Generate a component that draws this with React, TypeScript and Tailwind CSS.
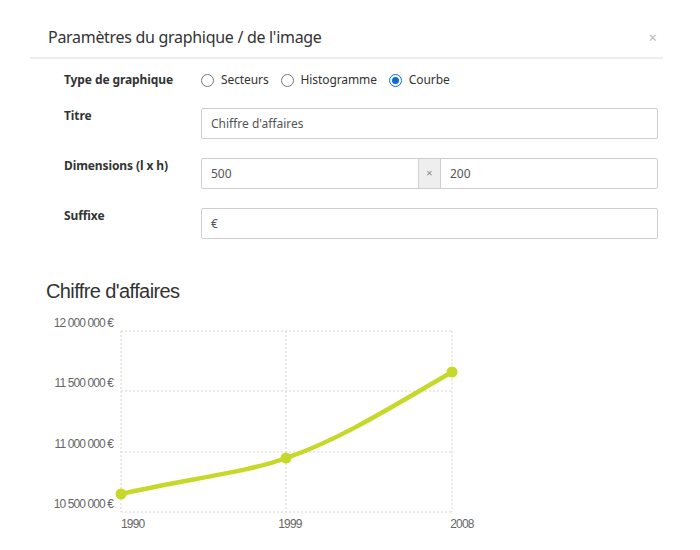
import React from "react";

const font = { fontFamily: "'Noto Sans', 'Open Sans', sans-serif" };

const Radio = ({ label, checked }: { label: string; checked?: boolean }) => (
  <label className="flex items-center gap-[7px] mr-[12px]">
    <span
      className={
        checked
          ? "w-[13px] h-[13px] rounded-full border border-[#0b6bd6] flex items-center justify-center"
          : "w-[13px] h-[13px] rounded-full border border-[#767676] bg-white"
      }
    >
      {checked && <span className="w-[7px] h-[7px] rounded-full bg-[#0b6bd6]" />}
    </span>
    <span className="text-[12px] text-[#333] tracking-[-0.1px]">{label}</span>
  </label>
);

const Row = ({ label, children }: { label: string; children: React.ReactNode }) => (
  <div className="grid grid-cols-[137px_1fr] h-[31px]">
    <div className="text-[12px] font-bold text-[#333] leading-[16px] tracking-[-0.1px]">{label}</div>
    <div>{children}</div>
  </div>
);

const inputCls =
  "w-full h-[31px] border border-[#cfcfcf] rounded-[2px] px-[9px] text-[12px] text-[#555] flex items-center";

// chart geometry (page coordinates, shifted into the svg)
const X0 = 121;
const X1 = 452;
const YTOP = 331;
const YBOT = 512;
const SVG_LEFT = 40;
const SVG_TOP = 305;

const Chart = () => {
  const ys = [331, 391, 452, 512];
  const yLabels = ["12 000 000 €", "11 500 000 €", "11 000 000 €", "10 500 000 €"];
  const xs = [121, 286, 452];
  const xLabels = ["1990", "1999", "2008"];
  const pts = [
    [121, 494],
    [286, 458],
    [452, 372],
  ];
  const ox = (x: number) => x - SVG_LEFT;
  const oy = (y: number) => y - SVG_TOP;
  return (
    <svg width={460} height={240} className="block ml-[40px]" style={{ fontFamily: "'Liberation Sans', Arial, sans-serif" }}>
      {ys.map((y) => (
        <line key={y} x1={ox(X0)} x2={ox(X1)} y1={oy(y)} y2={oy(y)} stroke="#d4d4d4" strokeDasharray="2 2" />
      ))}
      {xs.map((x) => (
        <line key={x} x1={ox(x)} x2={ox(x)} y1={oy(YTOP)} y2={oy(YBOT)} stroke="#d4d4d4" strokeDasharray="2 2" />
      ))}
      {ys.map((y, i) => (
        <text key={y} x={ox(113)} y={oy(y) - 4} textAnchor="end" fontSize={12} fill="#666" letterSpacing={-0.9}>
          {yLabels[i]}
        </text>
      ))}
      {xs.map((x, i) => (
        <text key={x} x={ox(x) + (i === 0 ? 0 : i === 1 ? 4 : 10)} y={oy(528)} textAnchor={i === 0 ? "start" : "middle"} fontSize={12} fill="#666" letterSpacing={-0.8}>
          {xLabels[i]}
        </text>
      ))}
      <path
        d={`M ${ox(121)} ${oy(494)} C ${ox(180)} ${oy(480)} ${ox(250)} ${oy(472)} ${ox(286)} ${oy(458)} C ${ox(340)} ${oy(440)} ${ox(400)} ${oy(402)} ${ox(452)} ${oy(372)}`}
        fill="none"
        stroke="#c6d82a"
        strokeWidth={4.5}
        strokeLinecap="round"
      />
      {pts.map(([x, y]) => (
        <circle key={x} cx={ox(x)} cy={oy(y)} r={5.5} fill="#c6d82a" />
      ))}
    </svg>
  );
};

export default function App() {
  return (
    <div className="w-[700px] h-[550px] bg-white overflow-hidden" style={font}>
      {/* header */}
      <div className="h-[59px] ml-[30px] mr-[37px] pt-[17px] pl-[18px] pr-[6px] flex justify-between items-center border-b-2 border-[#ececec]">
        <div className="text-[16px] text-[#333] tracking-[-0.3px]">Paramètres du graphique / de l'image</div>
        <div className="text-[15px] text-[#bbb] leading-none">×</div>
      </div>

      {/* form */}
      <div className="h-[191px] pl-[64px] pr-[42px] pt-[11px] flex flex-col gap-[19px]">
        <div className="grid grid-cols-[137px_1fr] h-[20px] items-center">
          <div className="text-[12px] font-bold text-[#333] tracking-[-0.1px]">Type de graphique</div>
          <div className="flex items-center">
            <Radio label="Secteurs" />
            <Radio label="Histogramme" />
            <Radio label="Courbe" checked />
          </div>
        </div>
        <div className="-mt-[1px]">
          <Row label="Titre">
            <div className={inputCls}>Chiffre d'affaires</div>
          </Row>
        </div>
        <Row label="Dimensions (l x h)">
          <div className="flex h-[31px] border border-[#cfcfcf] rounded-[2px] text-[12px] text-[#555]">
            <div className="flex-1 flex items-center px-[9px]">500</div>
            <div className="w-[23px] bg-[#eeeeee] border-x border-[#cfcfcf] flex items-center justify-center text-[11px] text-[#888]">×</div>
            <div className="flex-1 flex items-center px-[9px]">200</div>
          </div>
        </Row>
        <Row label="Suffixe">
          <div className={inputCls}>€</div>
        </Row>
      </div>

      {/* chart */}
      <div
        className="h-[55px] pl-[46px] pt-[29px] text-[20px] text-[#333] leading-[24px] tracking-[-0.6px]"
        style={{ fontFamily: "'Liberation Sans', Arial, sans-serif" }}
      >
        Chiffre d'affaires
      </div>
      <Chart />
    </div>
  );
}
